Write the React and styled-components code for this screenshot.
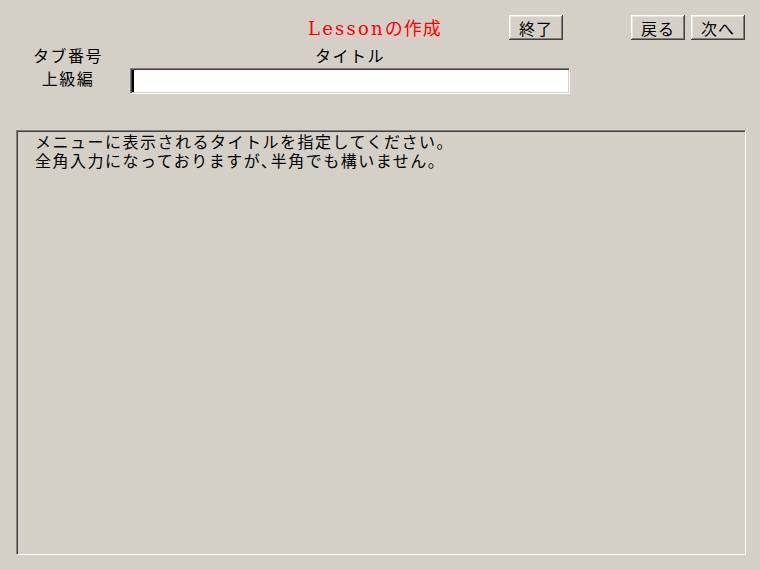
import React from "react";
import styled, { createGlobalStyle } from "styled-components";

const GlobalStyle = createGlobalStyle`
  html, body {
    margin: 0;
    padding: 0;
    background: #d4d0c8;
  }

  body {
    font-family: "Noto Sans CJK JP", sans-serif;
    color: #000;
  }
`;

const App = () => {
  return (
    <>
      <GlobalStyle />
      <StPage>
        <StTopBar>
          <StTitle>
            <StLatin>Lesson</StLatin>の作成
          </StTitle>
          <StQuitButton type="button">終了</StQuitButton>
          <StNavGroup>
            <StButton type="button">戻る</StButton>
            <StButton type="button">次へ</StButton>
          </StNavGroup>
        </StTopBar>

        <StForm>
          <StLabel>タブ番号</StLabel>
          <StLabel>タイトル</StLabel>
          <StLabel>上級編</StLabel>
          <StInputWrap>
            <StInput type="text" defaultValue="" />
          </StInputWrap>
        </StForm>

        <StMessage
          readOnly
          value={"メニューに表示されるタイトルを指定してください。\n全角入力になっておりますが､半角でも構いません。"}
        />
      </StPage>
    </>
  );
};

export default App;

const StPage = styled.div`
  box-sizing: border-box;
  width: 760px;
  height: 570px;
  padding: 15px 15px 0 16px;
  overflow: hidden;
`;

const StTopBar = styled.div`
  display: flex;
  align-items: center;

  height: 25px;
`;

const StTitle = styled.div`
  width: 136px;
  margin-left: 292px;

  font-size: 18px;
  line-height: 25px;
  letter-spacing: 1px;
  color: #ff0000;
  white-space: nowrap;
`;

const StLatin = styled.span`
  font-family: "DejaVu Serif", "Liberation Serif", serif;
  font-size: 18px;
  letter-spacing: 2.2px;
`;

const StButton = styled.button`
  box-sizing: border-box;
  width: 54px;
  height: 25px;
  padding: 0;

  background: #d4d0c8;
  border: none;
  box-shadow: inset -1px -1px #404040, inset 1px 1px #ffffff, inset -2px -2px #808080, inset 2px 2px #e8e6e2;

  font-family: "Noto Sans CJK JP", sans-serif;
  font-size: 16px;
  letter-spacing: 1px;
  color: #000;
`;

const StQuitButton = styled(StButton)`
  margin-left: 65px;
`;

const StNavGroup = styled.div`
  display: flex;
  gap: 6px;

  margin-left: auto;
`;

const StForm = styled.div`
  display: grid;
  grid-template-columns: 104px 440px;
  column-gap: 10px;
  row-gap: 3px;

  margin-top: 5px;
`;

const StLabel = styled.div`
  font-size: 16px;
  line-height: 20px;
  letter-spacing: 1.5px;
  text-align: center;
`;

const StInputWrap = styled.div`
  position: relative;

  &::after {
    content: "";
    position: absolute;
    left: 2px;
    top: 2px;
    width: 2px;
    height: 22px;
    background: #000;
  }
`;

const StInput = styled.input`
  box-sizing: border-box;
  width: 100%;
  height: 26px;
  padding: 0 4px;

  background: #fff;
  border: 1px solid;
  border-color: #808080 #ffffff #ffffff #808080;
  box-shadow: inset 1px 1px #404040, inset -1px -1px #d4d0c8;
  outline: none;
  caret-color: transparent;

  font-family: "Noto Sans CJK JP", sans-serif;
  font-size: 16px;
`;

const StMessage = styled.textarea`
  display: block;
  box-sizing: border-box;
  width: 730px;
  height: 425px;
  margin: 36px 0 0;
  padding: 1px 18px;

  background: transparent;
  border: 1px solid;
  border-color: #808080 #ffffff #ffffff #808080;
  box-shadow: inset 1px 1px #404040, inset -1px -1px #d4d0c8;
  outline: none;
  resize: none;
  overflow: hidden;

  font-family: "Noto Sans CJK JP", sans-serif;
  font-size: 16px;
  line-height: 19px;
  letter-spacing: 1.5px;
  color: #000;
`;
